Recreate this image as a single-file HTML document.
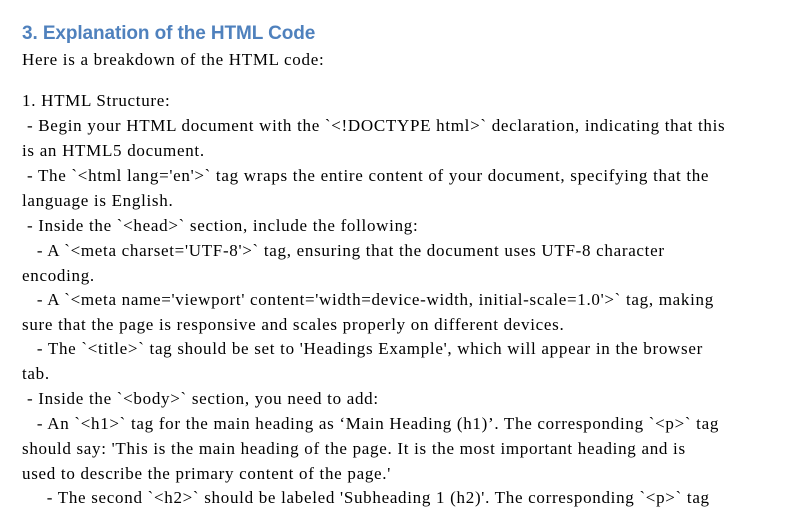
<!DOCTYPE html>
<html><head><meta charset="utf-8"><style>
body{margin:0;background:#fff;width:797px;height:524px;overflow:hidden;position:relative}
.l{position:absolute;left:22px;white-space:pre;font-family:"Liberation Serif",serif;font-size:17px;color:#000;line-height:20px;letter-spacing:0.7px}
h1{position:absolute;left:22px;top:22px;margin:0;font-family:"Liberation Sans",sans-serif;font-weight:bold;font-size:19px;color:#4f81bd;line-height:24px;letter-spacing:-0.1px}
</style></head><body>
<h1>3. Explanation of the HTML Code</h1>
<div class="l" style="top:50px">Here is a breakdown of the HTML code:</div>
<div class="l" style="top:91px">1. HTML Structure:</div>
<div class="l" style="top:116px"> - Begin your HTML document with the `&lt;!DOCTYPE html&gt;` declaration, indicating that this</div>
<div class="l" style="top:141px">is an HTML5 document.</div>
<div class="l" style="top:166px"> - The `&lt;html lang='en'&gt;` tag wraps the entire content of your document, specifying that the</div>
<div class="l" style="top:191px">language is English.</div>
<div class="l" style="top:216px"> - Inside the `&lt;head&gt;` section, include the following:</div>
<div class="l" style="top:241px">   - A `&lt;meta charset='UTF-8'&gt;` tag, ensuring that the document uses UTF-8 character</div>
<div class="l" style="top:266px">encoding.</div>
<div class="l" style="top:290px">   - A `&lt;meta name='viewport' content='width=device-width, initial-scale=1.0'&gt;` tag, making</div>
<div class="l" style="top:315px">sure that the page is responsive and scales properly on different devices.</div>
<div class="l" style="top:339px">   - The `&lt;title&gt;` tag should be set to 'Headings Example', which will appear in the browser</div>
<div class="l" style="top:364px">tab.</div>
<div class="l" style="top:389px"> - Inside the `&lt;body&gt;` section, you need to add:</div>
<div class="l" style="top:414px">   - An `&lt;h1&gt;` tag for the main heading as ‘Main Heading (h1)’. The corresponding `&lt;p&gt;` tag</div>
<div class="l" style="top:439px">should say: 'This is the main heading of the page. It is the most important heading and is</div>
<div class="l" style="top:464px">used to describe the primary content of the page.'</div>
<div class="l" style="top:488px">     - The second `&lt;h2&gt;` should be labeled 'Subheading 1 (h2)'. The corresponding `&lt;p&gt;` tag</div>
</body></html>
